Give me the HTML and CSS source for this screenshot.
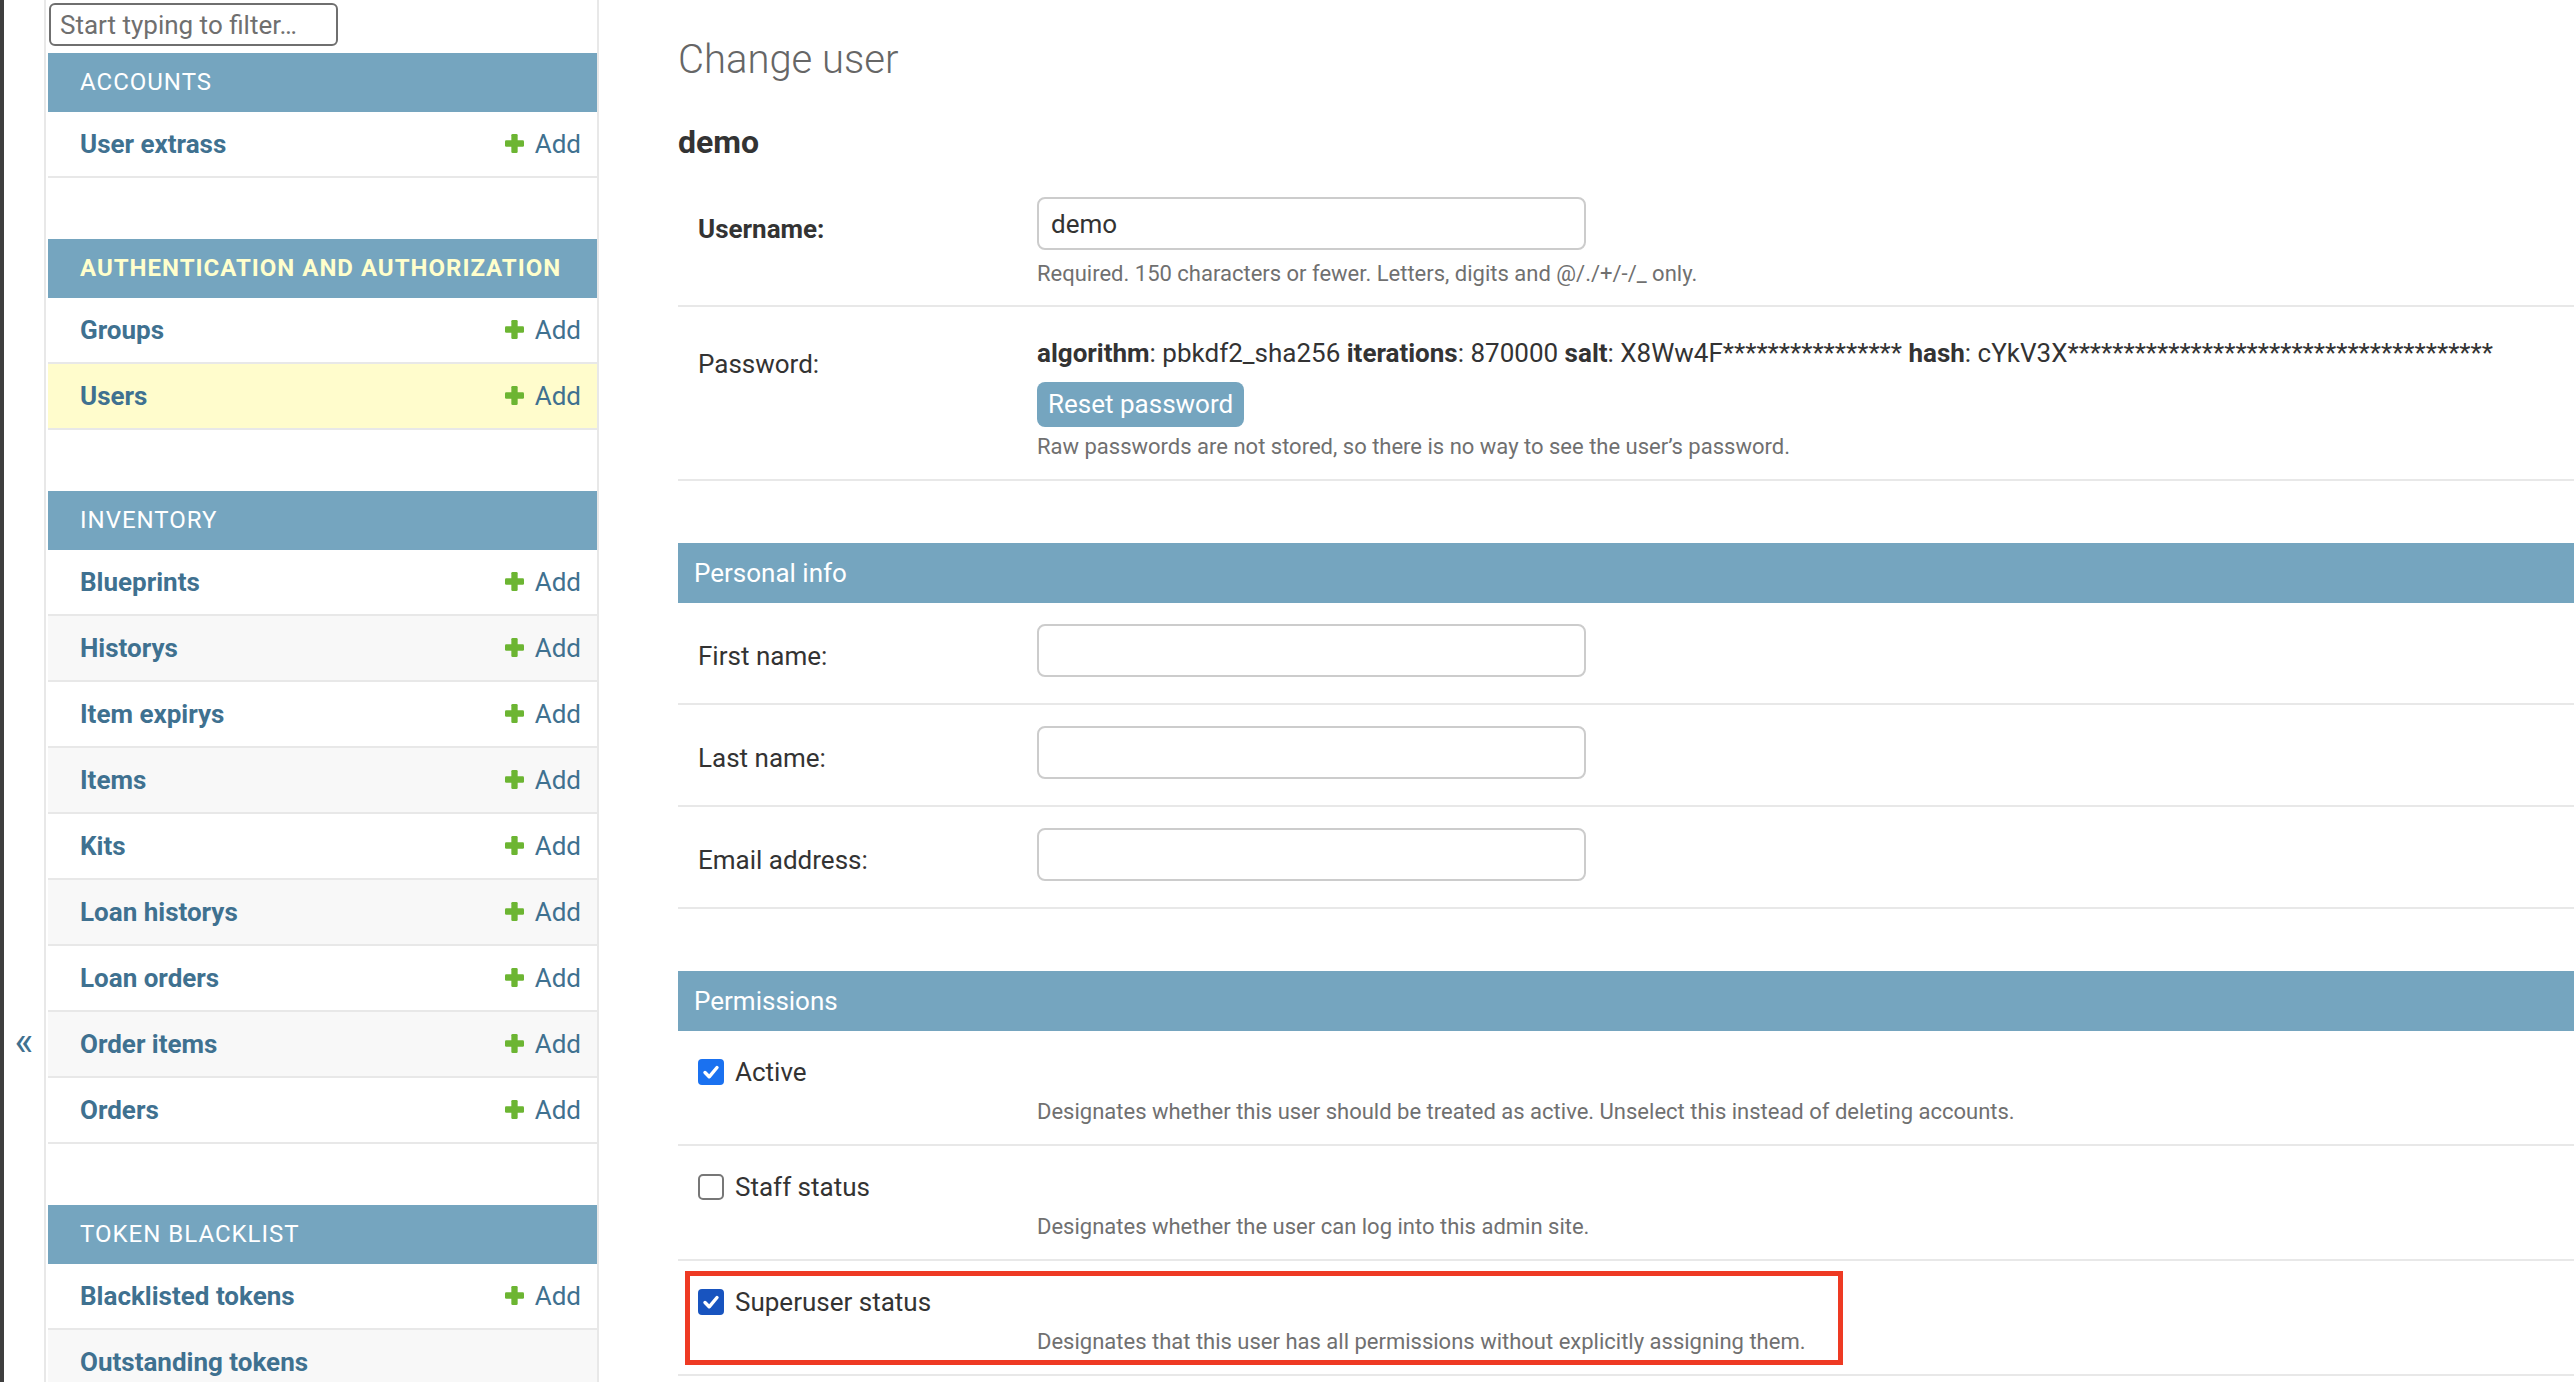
FILE: index.html
```html
<!DOCTYPE html>
<html lang="en">
<head>
  <meta charset="UTF-8" />
  <meta name="viewport" content="width=device-width, initial-scale=1.0" />
  <title>Change user | Django site admin</title>
  <link rel="stylesheet" href="styles.css">
</head>
<body>

<div class="main">
  <!-- Sidebar toggle -->
  <div class="toggle-nav"><a href="#" title="Toggle navigation">«</a></div>

  <!-- Navigation sidebar -->
  <nav class="sidebar">
    <input type="search" class="nav-filter" placeholder="Start typing to filter…" />

    <div class="app">
      <div class="app-caption">Accounts</div>
      <div class="app-row"><a href="#">User extrass</a><a class="addlink" href="#"><svg viewBox="0 0 18 18"><rect x="6" y="0" width="6" height="18" rx="1.2"/><rect x="0" y="6" width="18" height="6" rx="1.2"/></svg>Add</a></div>
    </div>

    <div class="app current-app">
      <div class="app-caption">Authentication and Authorization</div>
      <div class="app-row"><a href="#">Groups</a><a class="addlink" href="#"><svg viewBox="0 0 18 18"><rect x="6" y="0" width="6" height="18" rx="1.2"/><rect x="0" y="6" width="18" height="6" rx="1.2"/></svg>Add</a></div>
      <div class="app-row current-model"><a href="#">Users</a><a class="addlink" href="#"><svg viewBox="0 0 18 18"><rect x="6" y="0" width="6" height="18" rx="1.2"/><rect x="0" y="6" width="18" height="6" rx="1.2"/></svg>Add</a></div>
    </div>

    <div class="app">
      <div class="app-caption">Inventory</div>
      <div class="app-row"><a href="#">Blueprints</a><a class="addlink" href="#"><svg viewBox="0 0 18 18"><rect x="6" y="0" width="6" height="18" rx="1.2"/><rect x="0" y="6" width="18" height="6" rx="1.2"/></svg>Add</a></div>
      <div class="app-row"><a href="#">Historys</a><a class="addlink" href="#"><svg viewBox="0 0 18 18"><rect x="6" y="0" width="6" height="18" rx="1.2"/><rect x="0" y="6" width="18" height="6" rx="1.2"/></svg>Add</a></div>
      <div class="app-row"><a href="#">Item expirys</a><a class="addlink" href="#"><svg viewBox="0 0 18 18"><rect x="6" y="0" width="6" height="18" rx="1.2"/><rect x="0" y="6" width="18" height="6" rx="1.2"/></svg>Add</a></div>
      <div class="app-row"><a href="#">Items</a><a class="addlink" href="#"><svg viewBox="0 0 18 18"><rect x="6" y="0" width="6" height="18" rx="1.2"/><rect x="0" y="6" width="18" height="6" rx="1.2"/></svg>Add</a></div>
      <div class="app-row"><a href="#">Kits</a><a class="addlink" href="#"><svg viewBox="0 0 18 18"><rect x="6" y="0" width="6" height="18" rx="1.2"/><rect x="0" y="6" width="18" height="6" rx="1.2"/></svg>Add</a></div>
      <div class="app-row"><a href="#">Loan historys</a><a class="addlink" href="#"><svg viewBox="0 0 18 18"><rect x="6" y="0" width="6" height="18" rx="1.2"/><rect x="0" y="6" width="18" height="6" rx="1.2"/></svg>Add</a></div>
      <div class="app-row"><a href="#">Loan orders</a><a class="addlink" href="#"><svg viewBox="0 0 18 18"><rect x="6" y="0" width="6" height="18" rx="1.2"/><rect x="0" y="6" width="18" height="6" rx="1.2"/></svg>Add</a></div>
      <div class="app-row"><a href="#">Order items</a><a class="addlink" href="#"><svg viewBox="0 0 18 18"><rect x="6" y="0" width="6" height="18" rx="1.2"/><rect x="0" y="6" width="18" height="6" rx="1.2"/></svg>Add</a></div>
      <div class="app-row"><a href="#">Orders</a><a class="addlink" href="#"><svg viewBox="0 0 18 18"><rect x="6" y="0" width="6" height="18" rx="1.2"/><rect x="0" y="6" width="18" height="6" rx="1.2"/></svg>Add</a></div>
    </div>

    <div class="app">
      <div class="app-caption">Token Blacklist</div>
      <div class="app-row"><a href="#">Blacklisted tokens</a><a class="addlink" href="#"><svg viewBox="0 0 18 18"><rect x="6" y="0" width="6" height="18" rx="1.2"/><rect x="0" y="6" width="18" height="6" rx="1.2"/></svg>Add</a></div>
      <div class="app-row"><a href="#">Outstanding tokens</a></div>
    </div>
  </nav>

  <!-- Content -->
  <main class="content">
    <h1>Change user</h1>
    <h2 class="subtitle">demo</h2>

    <form>
      <fieldset class="module">
        <div class="form-row">
          <label class="required" for="id_username">Username:</label>
          <div class="field">
            <input type="text" class="text-input" id="id_username" value="demo" />
            <div class="help">Required. 150 characters or fewer. Letters, digits and @/./+/-/_ only.</div>
          </div>
        </div>
        <div class="form-row password-row">
          <label class="label-readonly">Password:</label>
          <div class="field">
            <div class="readonly"><strong>algorithm</strong>: pbkdf2_sha256 <strong>iterations</strong>: 870000 <strong>salt</strong>: X8Ww4F**************** <strong>hash</strong>: cYkV3X**************************************</div>
            <a class="button" href="#">Reset password</a>
            <div class="help">Raw passwords are not stored, so there is no way to see the user’s password.</div>
          </div>
        </div>
      </fieldset>

      <fieldset class="module personal">
        <h2>Personal info</h2>
        <div class="form-row">
          <label for="id_first_name">First name:</label>
          <div class="field"><input type="text" class="text-input" id="id_first_name" /></div>
        </div>
        <div class="form-row">
          <label for="id_last_name">Last name:</label>
          <div class="field"><input type="text" class="text-input" id="id_last_name" /></div>
        </div>
        <div class="form-row">
          <label for="id_email">Email address:</label>
          <div class="field"><input type="text" class="text-input" id="id_email" /></div>
        </div>
      </fieldset>

      <fieldset class="module permissions">
        <h2>Permissions</h2>
        <div class="form-row check-row">
          <div class="check-line">
            <span class="checkbox checked"><svg viewBox="0 0 26 26"><path d="M7 13.5l4.2 4.3L19 8.5"/></svg></span>
            <span class="check-label">Active</span>
          </div>
          <div class="help">Designates whether this user should be treated as active. Unselect this instead of deleting accounts.</div>
        </div>
        <div class="form-row check-row">
          <div class="check-line">
            <span class="checkbox"></span>
            <span class="check-label">Staff status</span>
          </div>
          <div class="help">Designates whether the user can log into this admin site.</div>
        </div>
        <div class="form-row check-row highlighted">
          <div class="check-line">
            <span class="checkbox checked dark"><svg viewBox="0 0 26 26"><path d="M7 13.5l4.2 4.3L19 8.5"/></svg></span>
            <span class="check-label">Superuser status</span>
          </div>
          <div class="help">Designates that this user has all permissions without explicitly assigning them.</div>
          <div class="annotation"></div>
        </div>
      </fieldset>
    </form>
  </main>
</div>

</body>
</html>
```

FILE: styles.css
```css
/* General */
* {
  box-sizing: border-box;
}

html,
body {
  margin: 0;
  height: 1382px;
  overflow: hidden;
}

body {
  font-family: Roboto, "Liberation Sans", sans-serif;
  color: #333;
  background: #fff;
  border-left: 4px solid #3e3e3e;
}

a {
  text-decoration: none;
  color: #3f7190;
}

.main {
  display: flex;
  height: 100%;
}

/* Toggle column */
.toggle-nav {
  flex: 0 0 42px;
  border-right: 2px solid #e8e8e8;
  padding-top: 1022px;
  text-align: center;
  font-size: 40px;
  line-height: 40px;
}

/* Sidebar */
.sidebar {
  flex: 0 0 553px;
  padding-left: 2px;
  border-right: 2px solid #e8e8e8;
}

.nav-filter {
  display: block;
  width: 289px;
  height: 43px;
  margin: 3px 0 7px 1px;
  padding: 0 9px;
  border: 2px solid #6f6f6f;
  border-radius: 6px;
  font-family: Roboto, sans-serif;
  font-size: 26px;
  color: #333;
  outline: none;
}

.nav-filter::placeholder {
  color: #6f6f6f;
}

.app {
  margin-bottom: 61px;
}

.app-caption {
  padding: 13px 16px 14px 32px;
  line-height: 32px;
  font-size: 24px;
  letter-spacing: 1px;
  text-transform: uppercase;
  color: #fff;
  background: #75a5bf;
}

.current-app .app-caption {
  color: #ffc;
  font-weight: 700;
}

.app-row {
  display: flex;
  align-items: center;
  justify-content: space-between;
  height: 66px;
  padding: 0 16px 0 32px;
  border-bottom: 2px solid #e8e8e8;
  font-size: 26px;
  line-height: 32px;
}

.app-row:nth-child(odd) {
  background: #f8f8f8;
}

.app-row.current-model {
  background: #fffccc;
}

.app-row > a:first-child {
  font-weight: 700;
}

.addlink {
  display: flex;
  align-items: center;
  gap: 11px;
}

.addlink svg {
  width: 19px;
  height: 19px;
  fill: #6cb532;
  margin-top: -2px;
}

/* Content */
.content {
  flex: 1;
  min-width: 0;
  padding-left: 79px;
}

h1 {
  margin: 36px 0 0;
  font-size: 40px;
  line-height: 48px;
  font-weight: 300;
  color: #666;
}

.subtitle {
  margin: 39px 0 16px;
  font-size: 32px;
  line-height: 38px;
  font-weight: 700;
  color: #333;
}

form {
  margin: 0;
}

fieldset {
  margin: 0;
  padding: 0;
  border: 0;
  min-width: 0;
}

fieldset.personal {
  margin-top: 62px;
}

fieldset.permissions {
  margin-top: 62px;
}

fieldset h2 {
  margin: 0;
  padding: 14px 16px;
  font-size: 26px;
  line-height: 32px;
  font-weight: 400;
  color: #fff;
  background: #75a5bf;
}

.form-row {
  display: flex;
  padding: 20px 0 17px 20px;
  border-bottom: 2px solid #e8e8e8;
  font-size: 26px;
  line-height: 32px;
}

.form-row.password-row {
  padding-bottom: 18px;
}

.form-row label {
  flex: 0 0 339px;
  padding-top: 16px;
  color: #333;
}

.form-row label.required {
  font-weight: 700;
}

.form-row label.label-readonly {
  padding-top: 21px;
}

.personal .form-row {
  padding-top: 21px;
  padding-bottom: 26px;
}

.text-input {
  display: block;
  width: 549px;
  height: 53px;
  padding: 0 12px;
  border: 2px solid #ccc;
  border-radius: 8px;
  font-family: Roboto, sans-serif;
  font-size: 26px;
  color: #333;
  outline: none;
}

.help {
  margin-top: 10px;
  font-size: 22px;
  line-height: 28px;
  color: #707070;
}

.readonly {
  margin-top: 10px;
  color: #333;
  white-space: nowrap;
}

.button {
  display: block;
  width: fit-content;
  margin-top: 13px;
  padding: 0 11px;
  line-height: 45px;
  border-radius: 8px;
  background: #75a5bf;
  color: #fff;
}

.readonly + .button + .help {
  margin-top: 6px;
}

/* Checkbox rows */
.check-row {
  position: relative;
  flex-direction: column;
  padding-top: 25px;
  padding-bottom: 18px;
}

.check-line {
  display: flex;
  align-items: center;
  gap: 11px;
  height: 32px;
}

.checkbox {
  width: 26px;
  height: 26px;
  border: 2px solid #777;
  border-radius: 5px;
  background: #fff;
}

.checkbox.checked {
  border: 0;
  border-radius: 4px;
  background: #1a71f0;
}

.checkbox.dark {
  background: #1854bf;
}

.checkbox svg {
  display: block;
  width: 26px;
  height: 26px;
  fill: none;
  stroke: #fff;
  stroke-width: 3.4;
  stroke-linecap: round;
  stroke-linejoin: round;
}

.check-label {
  color: #333;
}

.check-row .help {
  margin: 10px 0 0 339px;
}

/* Red highlight drawn over the superuser row */
.annotation {
  position: absolute;
  top: 10px;
  left: 7px;
  width: 1158px;
  height: 94px;
  border: 5px solid #ee3a23;
}
```
